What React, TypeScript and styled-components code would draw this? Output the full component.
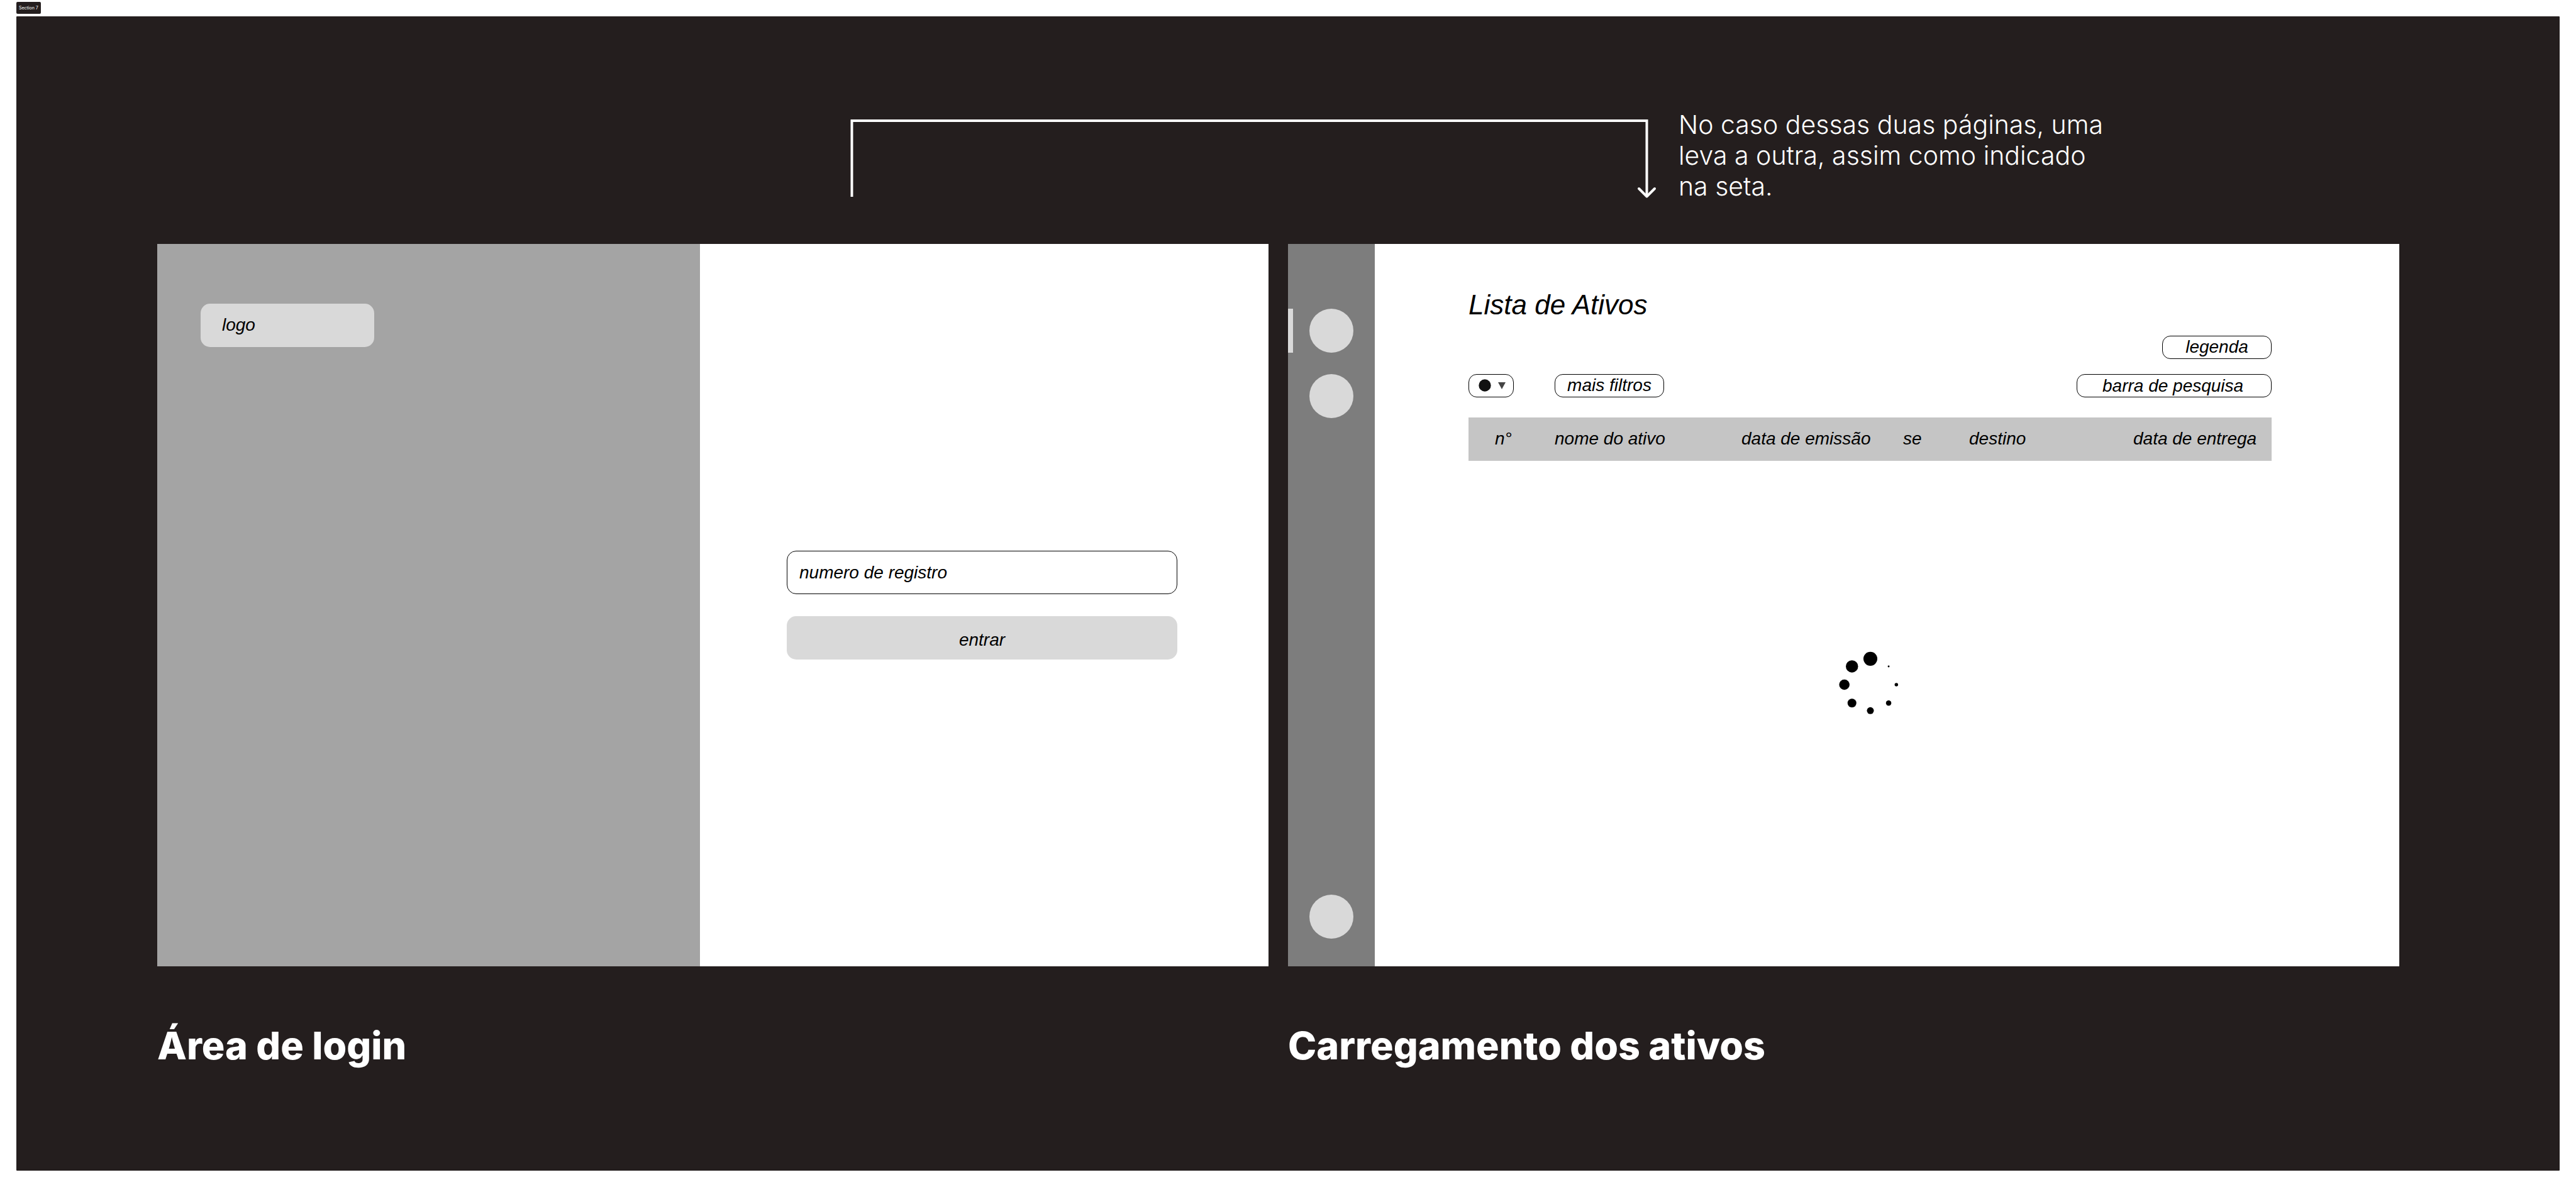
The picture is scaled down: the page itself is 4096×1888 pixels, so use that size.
import React from "react";
import styled, { createGlobalStyle } from "styled-components";

const GlobalStyle = createGlobalStyle`
  * { box-sizing: border-box; }
  body { margin: 0; background: #fff; }
`;

const ink = "#241e1e";
const sans = `"Liberation Sans", Arial, sans-serif`;
const inter = `Inter, sans-serif`;

const Page = styled.div`
  min-height: 100vh;
  display: flex;
  flex-direction: column;
  align-items: flex-start;
  gap: 4px;
  padding: 3px 26px 26px;
`;

const SectionTag = styled.div`
  height: 19px;
  padding: 0 4px;
  border-radius: 2px;
  background: ${ink};
  color: #fff;
  font: 400 7px/19px ${inter};
`;

const Section = styled.section`
  flex: 1;
  align-self: stretch;
  display: flex;
  flex-direction: column;
  gap: 67px;
  padding: 147px 255px 100px 224px;
  border-radius: 1px;
  background: ${ink};
  color: #fff;
`;

const Annotation = styled.div`
  display: flex;
  align-items: flex-end;
  gap: 35px;
  padding-left: 1102px;
`;

const Arrow = styled.svg`
  flex: none;
  width: 1282px;
  height: 148px;
  fill: none;
  stroke: #fff;
  stroke-width: 4;
`;

const Note = styled.p`
  max-width: 700px;
  margin: 0;
  font: 360 41px/49px ${inter};
`;

const Frames = styled.div`
  display: grid;
  grid-template-columns: 1fr 1fr;
  gap: 31px;
`;

const Figure = styled.figure`
  display: flex;
  flex-direction: column;
  gap: 89px;
  margin: 0;
`;

const Caption = styled.figcaption`
  font: 800 61px/74px ${inter};
`;

const Frame = styled.div`
  display: flex;
  aspect-ratio: 1767 / 1149;
  background: #fff;
  color: #000;
  font: italic 400 28px/34px ${sans};
`;

const Brand = styled.aside`
  width: 863px;
  padding: 95px 69px;
  background: #a4a4a4;
`;

const Logo = styled.div`
  width: 276px;
  height: 69px;
  padding: 17px 34px;
  border-radius: 15px;
  background: #d9d9d9;
`;

const LoginForm = styled.form`
  flex: 1;
  display: flex;
  flex-direction: column;
  justify-content: center;
  gap: 35px;
  padding: 0 145px 0 138px;
`;

const TextField = styled.input`
  height: 69px;
  padding: 0 19px;
  border: 1px solid #000;
  border-radius: 15px;
  background: #fff;
  color: #000;
  font: inherit;
  &::placeholder { color: #000; opacity: 1; }
`;

const Submit = styled.button`
  height: 69px;
  padding: 6px 0 0;
  border: 0;
  border-radius: 15px;
  background: #d9d9d9;
  color: #000;
  font: inherit;
`;

const Sidebar = styled.nav`
  width: 138px;
  display: flex;
  flex-direction: column;
  gap: 34px;
  padding: 103px 0 44px;
  background: #7d7d7d;
`;

const NavItem = styled.button<{ $active?: boolean; $last?: boolean }>`
  display: flex;
  justify-content: center;
  height: 70px;
  margin-top: ${(p) => (p.$last ? "auto" : "0")};
  padding: 0 8px 0 0;
  border: 0;
  border-left: 8px solid ${(p) => (p.$active ? "#d9d9d9" : "transparent")};
  background: none;
  &::before {
    content: "";
    width: 70px;
    height: 70px;
    border-radius: 50%;
    background: #d9d9d9;
  }
`;

const Main = styled.main`
  flex: 1;
  display: flex;
  flex-direction: column;
  padding: 72px 203px 92px 149px;
`;

const Title = styled.h1`
  margin: 0 0 24px;
  font: italic 400 44px/50px ${sans};
`;

const Toolbar = styled.div<{ $end?: boolean; $gap: number }>`
  display: flex;
  justify-content: ${(p) => (p.$end ? "flex-end" : "flex-start")};
  gap: 65px;
  margin-bottom: ${(p) => p.$gap}px;
`;

const Pill = styled.button`
  width: 174px;
  height: 37px;
  padding: 0 0 2px;
  border: 1px solid #000;
  border-radius: 13px;
  background: #fff;
  color: #000;
  font: inherit;
`;

const Search = styled(TextField)`
  width: 310px;
  height: 37px;
  margin-left: auto;
  padding: 0 0 0 40px;
  border-radius: 13px;
  appearance: none;
  &::-webkit-search-cancel-button { display: none; }
`;

const ColorPicker = styled.label`
  position: relative;
  width: 72px;
  height: 37px;
`;

const ColorSelect = styled.select`
  display: block;
  width: 100%;
  height: 100%;
  border: 1px solid #000;
  border-radius: 13px;
  background: #fff;
  appearance: none;
`;

const ColorMark = styled.svg`
  position: absolute;
  inset: 0;
  width: 72px;
  height: 37px;
  pointer-events: none;
`;

const Table = styled.table`
  width: 100%;
  table-layout: fixed;
  border-collapse: collapse;
  background: #c5c5c5;
`;

const HeadCell = styled.th<{ $width?: number; $indent?: number }>`
  width: ${(p) => (p.$width ? `${p.$width}px` : "auto")};
  height: 69px;
  padding: 0 0 2px ${(p) => p.$indent ?? 0}px;
  font-weight: 400;
  text-align: left;
  white-space: nowrap;
`;

const Loading = styled.div`
  flex: 1;
  display: flex;
  align-items: center;
  justify-content: center;
`;

const columns = [
  { label: "n°", width: 137, indent: 42 },
  { label: "nome do ativo", width: 297 },
  { label: "data de emissão", width: 257 },
  { label: "se", width: 105 },
  { label: "destino", width: 261 },
  { label: "data de entrega" },
];

const dots = [
  [362, 186, 52],
  [499, 243, 7],
  [557, 380, 13],
  [499, 518, 20],
  [362, 575, 26],
  [224, 518, 33],
  [167, 380, 39],
  [224, 243, 46],
];

function LoginFrame() {
  return (
    <Frame>
      <Brand>
        <Logo>logo</Logo>
      </Brand>
      <LoginForm onSubmit={(e) => e.preventDefault()}>
        <TextField aria-label="numero de registro" placeholder="numero de registro" />
        <Submit type="submit">entrar</Submit>
      </LoginForm>
    </Frame>
  );
}

function AssetsFrame() {
  return (
    <Frame>
      <Sidebar>
        <NavItem $active type="button" aria-label="Ativos" />
        <NavItem type="button" aria-label="Painel" />
        <NavItem $last type="button" aria-label="Conta" />
      </Sidebar>
      <Main>
        <Title>Lista de Ativos</Title>
        <Toolbar $end $gap={24}>
          <Pill type="button">legenda</Pill>
        </Toolbar>
        <Toolbar $gap={32}>
          <ColorPicker>
            <ColorSelect aria-label="Cor">
              <option value="preto" aria-label="Preto" />
            </ColorSelect>
            <ColorMark viewBox="0 0 72 37" aria-hidden="true">
              <circle cx="26" cy="18" r="9.700" fill="#111" />
              <path d="M47 13h12l-6 11z" fill="#444" />
            </ColorMark>
          </ColorPicker>
          <Pill type="button">mais filtros</Pill>
          <Search type="search" aria-label="barra de pesquisa" placeholder="barra de pesquisa" />
        </Toolbar>
        <Table>
          <thead>
            <tr>
              {columns.map((c) => (
                <HeadCell key={c.label} scope="col" $width={c.width} $indent={c.indent}>
                  {c.label}
                </HeadCell>
              ))}
            </tr>
          </thead>
        </Table>
        <Loading role="status" aria-label="Carregando">
          <svg width="106" height="106" viewBox="112 130 500 500">
            {dots.map(([cx, cy, r]) => (
              <circle key={r} cx={cx} cy={cy} r={r} />
            ))}
          </svg>
        </Loading>
      </Main>
    </Frame>
  );
}

export default function App() {
  return (
    <>
      <GlobalStyle />
      <Page>
        <SectionTag>Section 7</SectionTag>
        <Section>
          <Annotation>
            <Arrow viewBox="0 0 1282 148" aria-hidden="true">
              <path d="M2.500 140V19H1266.500V139" />
              <path d="M1254 127l12.500 12.500L1279 127" strokeLinecap="round" strokeLinejoin="round" />
            </Arrow>
            <Note>No caso dessas duas páginas, uma leva a outra, assim como indicado na seta.</Note>
          </Annotation>
          <Frames>
            <Figure>
              <LoginFrame />
              <Caption>Área de login</Caption>
            </Figure>
            <Figure>
              <AssetsFrame />
              <Caption>Carregamento dos ativos</Caption>
            </Figure>
          </Frames>
        </Section>
      </Page>
    </>
  );
}
